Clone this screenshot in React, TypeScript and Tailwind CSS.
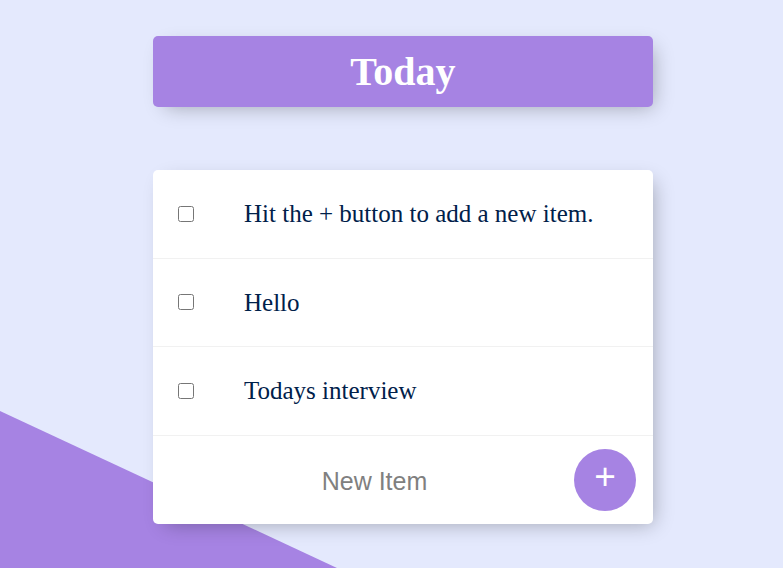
import React from "react";

const items = ["Hit the + button to add a new item.", "Hello", "Todays interview"];

export default function App() {
  return (
    <div className="relative min-h-screen w-full overflow-hidden bg-[#E4E9FD]">
      <svg
        className="absolute left-0 top-0"
        width={783}
        height={568}
        viewBox="0 0 783 568"
      >
        <polygon points="0,411 337,568 0,568" fill="#A683E3" />
      </svg>
      <div className="relative flex flex-col pt-[36px] pl-[153px]">
        <div className="flex h-[71px] w-[500px] items-center justify-center rounded-[5px] bg-[#A683E3] shadow-[6px_6px_19px_-6px_rgba(0,0,0,0.3)]">
          <h1 className="text-[40px] font-bold leading-none text-white [font-family:'Liberation_Serif',serif]">
            Today
          </h1>
        </div>
        <div className="mt-[63px] w-[500px] rounded-[5px] bg-white shadow-[6px_6px_19px_-6px_rgba(0,0,0,0.3)]">
          {items.map((t) => (
            <div
              key={t}
              className="flex h-[88.5px] items-center border-b border-[#F1F1F1]"
            >
              <input
                type="checkbox"
                className="ml-[25px] mr-[25px] h-4 w-4 shrink-0"
              />
              <p className="pl-[25px] text-[25px] text-[#00204a] [font-family:'Liberation_Serif',serif]">
                {t}
              </p>
            </div>
          ))}
          <div className="flex h-[88px] items-center">
            <input
              type="text"
              placeholder="New Item"
              className="ml-[26px] h-[75px] w-[391px] bg-transparent pt-[3px] text-center text-[25px] outline-none placeholder:text-[#808080] [font-family:'Liberation_Sans',sans-serif]"
            />
            <button className="ml-[4px] flex h-[62px] w-[62px] items-center justify-center rounded-full bg-[#A683E3] pb-[7px] text-[37px] leading-none text-white [font-family:'Liberation_Sans',sans-serif]">
              +
            </button>
          </div>
        </div>
      </div>
    </div>
  );
}
